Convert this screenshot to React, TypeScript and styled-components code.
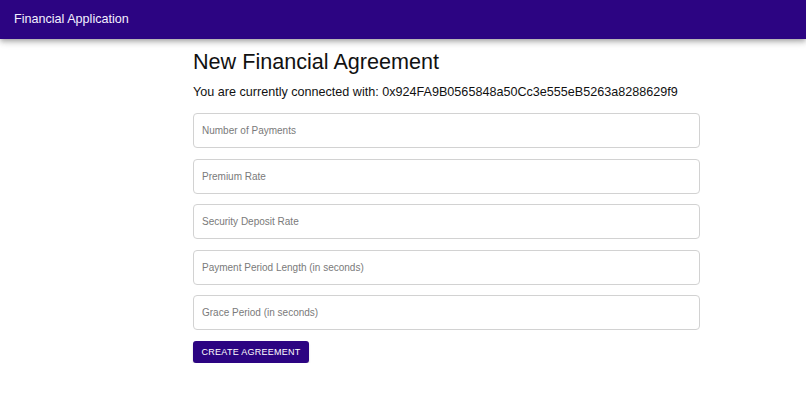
import styled, { createGlobalStyle } from 'styled-components';

const Global = createGlobalStyle`
    body {
        margin: 0;
        background: #fff;
        font-family: "Liberation Sans", Arial, sans-serif;
    }
`

const AppBar = styled.header`
    height: 39px;
    background-color: #2c0482;
    color: #fff;
    display: flex;
    align-items: center;
    padding: 0 14px;
    box-shadow: 0 2px 4px -1px rgba(0,0,0,0.2), 0 4px 5px 0 rgba(0,0,0,0.14), 0 1px 10px 0 rgba(0,0,0,0.12);
`

const Brand = styled.div`
    font-size: 12.6px;
    padding-bottom: 2px;
    color: #f4f0ff;
`

const Main = styled.main`
    width: 507px;
    margin-left: 193px;
    padding-top: 10px;
`

const Title = styled.h1`
    margin: 0;
    font-size: 21.6px;
    font-weight: 400;
    line-height: 26px;
    color: #111;
`

const Sub = styled.p`
    margin: 9px 0 13px;
    font-size: 12.6px;
    line-height: 16px;
    color: #111;
`

const Form = styled.form`
    display: flex;
    flex-direction: column;
    gap: 10.5px;
`

const Input = styled.input`
    box-sizing: border-box;
    width: 100%;
    height: 35px;
    border: 1px solid #d2d2d2;
    border-radius: 4px;
    padding: 0 8px;
    font-family: inherit;
    font-size: 10px;
    color: #333;
    outline: none;
    &::placeholder {
        color: #7a7a7a;
    }
`

const Button = styled.button`
    align-self: flex-start;
    margin-top: 0.5px;
    width: 116px;
    height: 22px;
    border: none;
    border-radius: 3px;
    background-color: #2c0482;
    color: #fff;
    font-family: inherit;
    font-size: 9px;
    letter-spacing: 0.25px;
    text-transform: uppercase;
    box-shadow: 0 2px 2px rgba(0,0,0,0.18);
    cursor: pointer;
`

const fields = [
    'Number of Payments',
    'Premium Rate',
    'Security Deposit Rate',
    'Payment Period Length (in seconds)',
    'Grace Period (in seconds)',
]

function App() {
  return (
    <>
    <Global />
    <AppBar>
        <Brand>Financial Application</Brand>
    </AppBar>
    <Main>
        <Title>New Financial Agreement</Title>
        <Sub>You are currently connected with: 0x924FA9B0565848a50Cc3e555eB5263a8288629f9</Sub>
        <Form onSubmit={(e) => e.preventDefault()}>
            {fields.map((f) => (
                <Input key={f} placeholder={f} />
            ))}
            <Button type="submit">Create Agreement</Button>
        </Form>
    </Main>
    </>
  )
}

export default App;
